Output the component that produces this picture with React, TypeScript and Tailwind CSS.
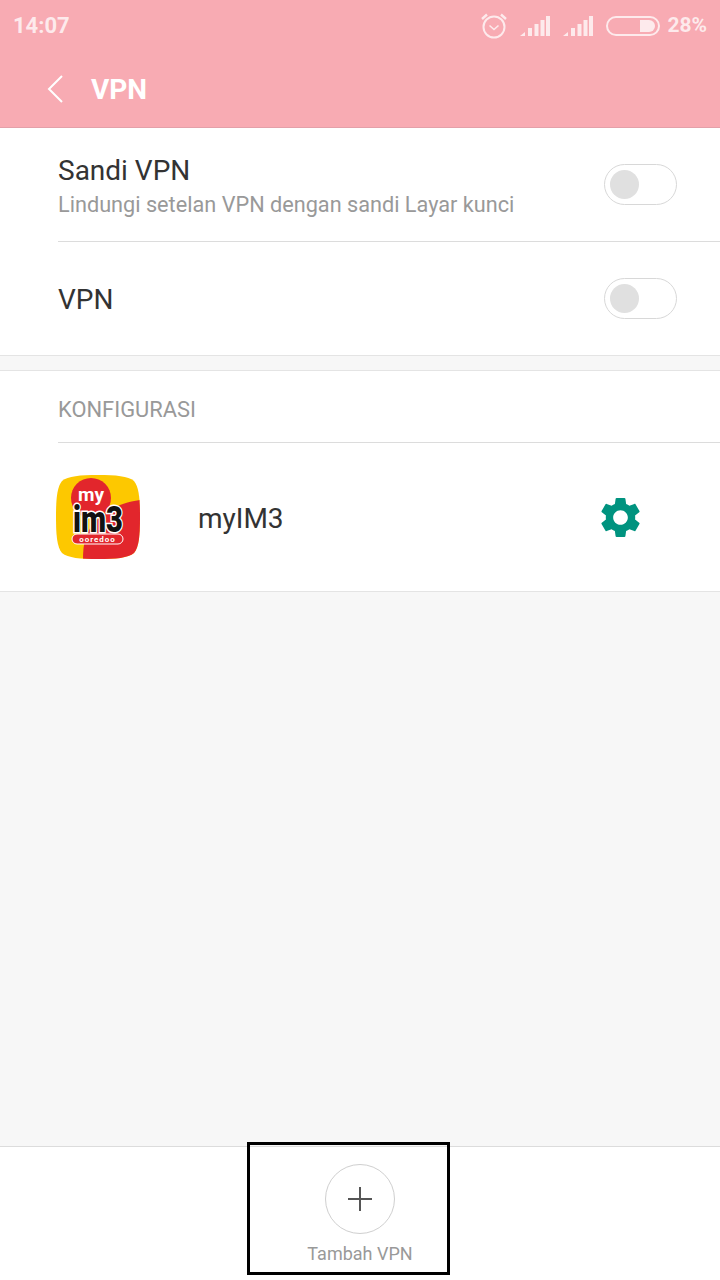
import React from 'react';

const GEAR =
  'M19.14 12.94c.04-.3.06-.61.06-.94 0-.32-.02-.64-.07-.94l2.03-1.58c.18-.14.23-.41.12-.61l-1.92-3.32c-.12-.22-.37-.29-.59-.22l-2.39.96c-.5-.38-1.03-.7-1.62-.94l-.36-2.54c-.04-.24-.24-.41-.48-.41h-3.84c-.24 0-.43.17-.47.41l-.36 2.54c-.59.24-1.13.57-1.62.94l-2.39-.96c-.22-.08-.47 0-.59.22L2.74 8.87c-.12.21-.08.47.12.61l2.03 1.58c-.05.3-.09.63-.09.94s.02.64.07.94l-2.03 1.58c-.18.14-.23.41-.12.61l1.92 3.32c.12.22.37.29.59.22l2.39-.96c.5.38 1.03.7 1.62.94l.36 2.54c.05.24.24.41.48.41h3.84c.24 0 .44-.17.47-.41l.36-2.54c.59-.24 1.13-.56 1.62-.94l2.39.96c.22.08.47 0 .59-.22l1.92-3.32c.12-.22.07-.47-.12-.61l-2.01-1.58zM12 15.6c-1.98 0-3.6-1.62-3.6-3.6s1.62-3.6 3.6-3.6 3.6 1.62 3.6 3.6-1.62 3.6-3.6 3.6z';

const Signal = () => (
  <svg width="30" height="20" viewBox="0 0 30 20" className="text-white/75">
    <polygon points="0,20 5,16 5,20" fill="currentColor" />
    <rect x="8" y="12" width="4" height="8" fill="currentColor" />
    <rect x="14.5" y="8" width="4" height="12" fill="currentColor" />
    <rect x="20.5" y="4" width="4" height="16" fill="currentColor" />
    <rect x="26" y="0" width="4" height="20" fill="currentColor" />
  </svg>
);

const Toggle = () => (
  <div className="flex h-[41px] w-[73px] items-center rounded-full border border-[#d8d8d8] bg-white pl-[5px]">
    <div className="h-[29px] w-[29px] rounded-full bg-[#e0e0e0]" />
  </div>
);

const Logo = () => (
  <svg width="84" height="84" viewBox="0 0 84 84">
    <defs>
      <clipPath id="squircle">
        <path d="M42 0C60 0 72 1 78 6C83 12 84 24 84 42C84 60 83 72 78 78C72 83 60 84 42 84C24 84 12 83 6 78C1 72 0 60 0 42C0 24 1 12 6 6C12 1 24 0 42 0Z" />
      </clipPath>
    </defs>
    <g clipPath="url(#squircle)">
      <rect width="84" height="84" fill="#fdc800" />
      <path d="M27 84C27 70 29 58 38 48C50 35 64 28 84 25V84Z" fill="#e2262c" />
      <circle cx="35" cy="23" r="20" fill="#e2262c" />
    </g>
    <text x="35" y="26" textAnchor="middle" fontFamily="Roboto, sans-serif" fontWeight="700" fontSize="19" fill="#ffffff">my</text>
    <text
      x="17"
      y="57"
      textLength="50"
      lengthAdjust="spacingAndGlyphs"
      fontFamily="Roboto, sans-serif"
      fontWeight="900"
      fontSize="37"
      fill="#111111"
      stroke="#ffffff"
      strokeWidth="3"
      paintOrder="stroke"
    >
      im3
    </text>
    <rect x="16" y="59" width="51" height="10" rx="5" fill="#e2262c" stroke="#ffffff" strokeWidth="1" />
    <text x="41.5" y="66.5" textAnchor="middle" fontFamily="Roboto, sans-serif" fontWeight="700" fontSize="8" letterSpacing="1" fill="#ffffff">ooredoo</text>
  </svg>
);

export default function App() {
  return (
    <div className="relative flex h-[1280px] w-[720px] flex-col bg-[#f7f7f7] font-['Roboto',sans-serif]">
      <header className="h-[128px] shrink-0 border-b border-[#e3a0a9] bg-[#f8abb3]">
        <div className="flex h-[50px] items-center justify-between pl-[13px] pr-[13px] pt-[1px] text-[22px] font-bold text-white/75">
          <span>14:07</span>
          <div className="flex items-center">
            <svg width="28" height="28" viewBox="0 0 28 28" fill="none" stroke="currentColor" strokeWidth="2" className="mr-[12px]">
              <circle cx="14" cy="15" r="10.5" />
              <path d="M9.5 13.5L14 17.5L18.5 13.5" strokeWidth="1.6" />
              <path d="M2 7L7 2.5M26 7L21 2.5" strokeWidth="2.4" />
            </svg>
            <Signal />
            <div className="w-[13px]" />
            <Signal />
            <div className="ml-[13px] flex h-[20px] w-[54px] items-center justify-end rounded-full border-2 border-white/75 pr-[3px]">
              <div className="h-[12px] w-[15px] rounded-r-full bg-white/75" />
            </div>
            <span className="ml-[7px] text-[21px]">28%</span>
          </div>
        </div>
        <div className="flex h-[77px] items-center pl-[47px]">
          <svg width="16" height="28" viewBox="0 0 16 28" fill="none" stroke="#ffffff" strokeWidth="2">
            <path d="M15 1L2 14L15 27" />
          </svg>
          <span className="ml-[28px] mt-[2px] text-[28px] font-bold leading-none text-white">VPN</span>
        </div>
      </header>

      <section className="shrink-0 border-b border-[#e4e4e4] bg-white">
        <div className="ml-[58px] flex h-[114px] items-center justify-between border-b border-[#dcdcdc] pr-[43px]">
          <div className="mt-[4px]">
            <div className="text-[28px] leading-[36px] text-[#333333]">Sandi VPN</div>
            <div className="text-[21.7px] leading-[32px] text-[#999999]">Lindungi setelan VPN dengan sandi Layar kunci</div>
          </div>
          <Toggle />
        </div>
        <div className="ml-[58px] flex h-[113px] items-center justify-between pr-[43px]">
          <span className="mt-[2px] text-[28px] text-[#333333]">VPN</span>
          <Toggle />
        </div>
      </section>

      <section className="mt-[14px] shrink-0 border-y border-[#e4e4e4] bg-white">
        <div className="ml-[58px] flex h-[72px] items-center border-b border-[#dcdcdc] pt-[7px] text-[21.9px] text-[#999999]">
          KONFIGURASI
        </div>
        <div className="flex h-[148px] items-center pl-[56px]">
          <Logo />
          <span className="ml-[58px] mt-[3px] text-[28px] text-[#333333]">myIM3</span>
          <svg width="49" height="49" viewBox="0 0 24 24" fill="#00937f" className="ml-[312px]">
            <path d={GEAR} />
          </svg>
        </div>
      </section>

      <div className="flex-1" />

      <footer className="flex h-[134px] shrink-0 flex-col items-center border-t border-[#dcdcdc] bg-white pt-[17px]">
        <div className="flex h-[70px] w-[70px] items-center justify-center rounded-full border border-[#cfcfcf]">
          <svg width="24" height="24" viewBox="0 0 24 24" stroke="#555555" strokeWidth="2">
            <path d="M12 0V24M0 12H24" />
          </svg>
        </div>
        <span className="mt-[7px] text-[18px] leading-[26px] text-[#999999]">Tambah VPN</span>
      </footer>

      <div className="absolute left-[247px] top-[1142px] h-[133px] w-[203px] border-[3px] border-black" />
    </div>
  );
}
